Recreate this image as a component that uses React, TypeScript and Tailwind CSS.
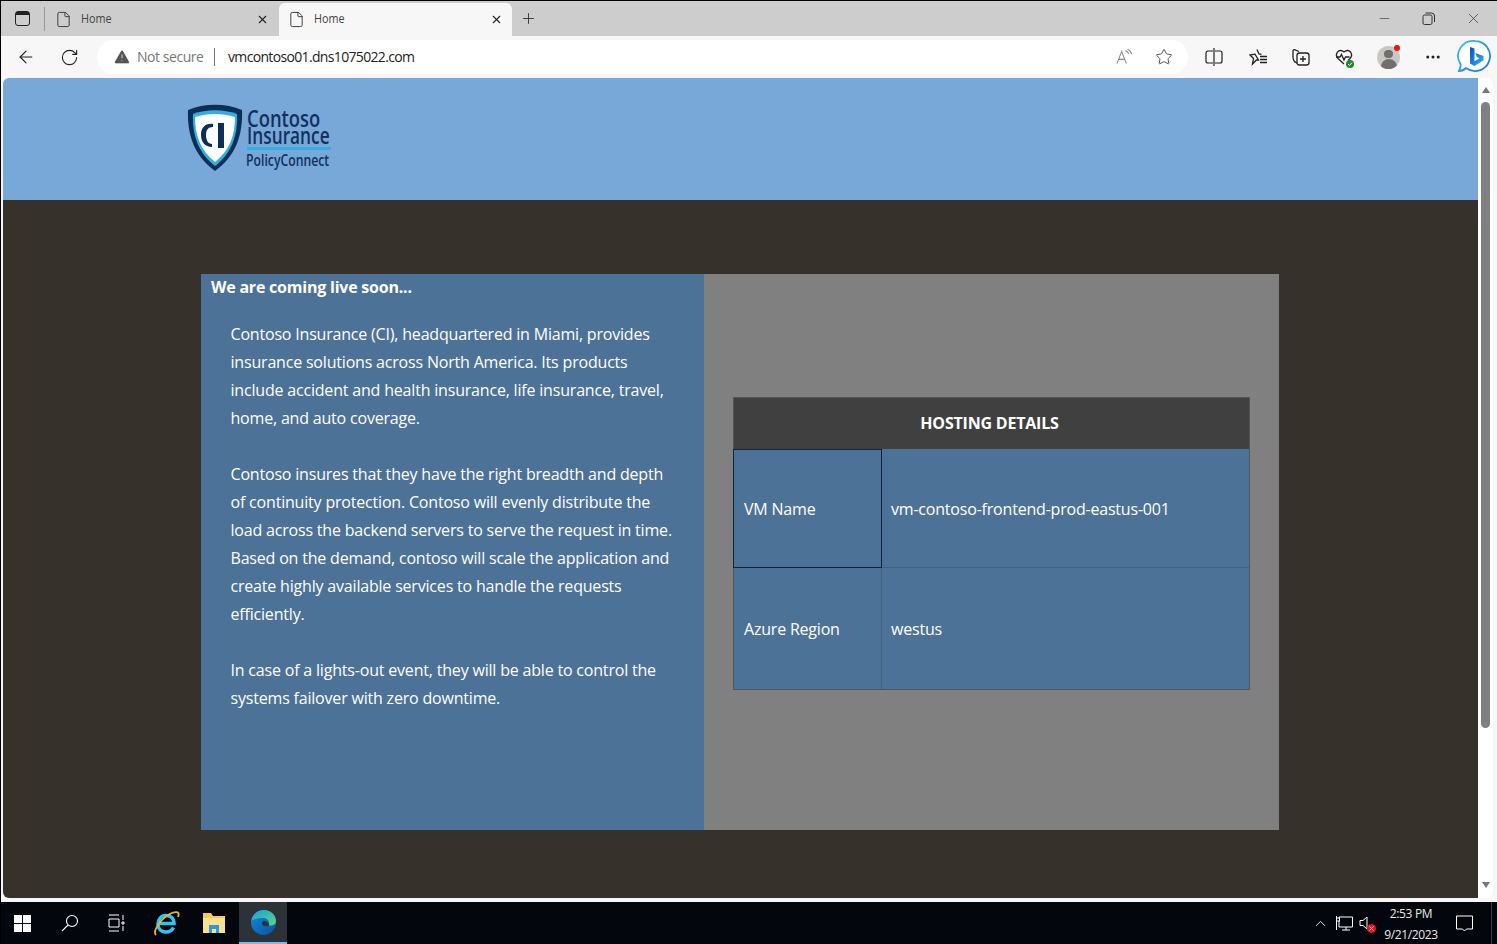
import { ArrowLeft, RotateCw, Star, Plus, X, Minus, File, ChevronUp, MoreHorizontal, TriangleAlert } from "lucide-react";

const chromeFont = "font-['Open_Sans',sans-serif]";

function Tab({ active }: { active?: boolean }) {
  return (
    <div
      className={`flex h-[33px] w-[233px] items-center rounded-t-md pl-[9px] ${
        active ? "bg-[#f7f7f7] pr-[9px]" : "pr-[10px]"
      }`}
    >
      <File size={17} strokeWidth={1.3} className="text-[#333]" />
      <span className="ml-[9px] origin-left scale-x-[0.9] pb-[2px] text-[12px] text-[#444]">Home</span>
      <X size={13} strokeWidth={2} className="ml-auto text-[#222]" />
    </div>
  );
}

function BingIcon() {
  return (
    <svg width="34" height="36" viewBox="0 0 34 36">
      <defs>
        <linearGradient id="bingRing" x1="0" y1="0" x2="1" y2="1">
          <stop offset="0" stopColor="#39c2f5" />
          <stop offset="1" stopColor="#1c6fe0" />
        </linearGradient>
        <linearGradient id="bingB" x1="0" y1="0" x2="1" y2="1">
          <stop offset="0" stopColor="#0b4fc0" />
          <stop offset="1" stopColor="#2bb6f2" />
        </linearGradient>
      </defs>
      <path d="M18 2a15 15 0 1 1-9 27c-2 2-4 3-7 3 1-2 2-4 1.500-7A15 15 0 0 1 18 2z" fill="#fff" stroke="url(#bingRing)" strokeWidth="1.800" />
      <path d="M13 8l4.500 1.600v12.600l5-2.900-2.600-1.200-1.600-4.100 8.200 2.900v4.300L17.500 27 13 24.500z" fill="url(#bingB)" />
    </svg>
  );
}

function ReadAloudIcon() {
  return (
    <svg width="17" height="18" viewBox="0 0 18 18" fill="none" stroke="#888" strokeWidth="1.100">
      <path d="M1 16L6 3l5 13M3 11.500h6" />
      <path d="M10 2c2 .5 3 2 3.500 4M12 1c2.500 .5 4 2.500 4.500 5" />
    </svg>
  );
}

function FavoritesIcon() {
  return (
    <svg width="20" height="18" viewBox="0 0 20 18" fill="none" stroke="#222" strokeWidth="1.300">
      <path d="M8 1.500l2 4.500 2.500.3M9.500 12h-2l-4 4 1-5.500L1 7l5-.8z" />
      <path d="M11 8.500h7M11 11.500h7M11 14.500h7" />
    </svg>
  );
}

function CollectionsIcon() {
  return (
    <svg width="18" height="18" viewBox="0 0 18 18" fill="none" stroke="#222" strokeWidth="1.300">
      <path d="M7 3.500L3 1.800C2 1.500 1 2 1 3v6c0 3 1 5 4 6" />
      <rect x="5" y="5" width="12" height="12" rx="2.500" />
      <path d="M11 8v6M8 11h6" />
    </svg>
  );
}

function HealthIcon() {
  return (
    <div className="relative h-[18px] w-[18px]">
      <svg width="18" height="18" viewBox="0 0 18 18" fill="none" stroke="#222" strokeWidth="1.300">
        <path d="M9 16L3 10.500C-1 6 4-.5 9 4c5-4.500 10 2 6 6.500l-2 2" />
        <path d="M1 9h4l1.500-2.500L9 12l1.500-3h4" />
      </svg>
      <div className="absolute bottom-[-2px] right-[-1px] flex h-[8px] w-[8px] items-center justify-center rounded-full bg-[#1a8a2e]">
        <svg width="6" height="6" viewBox="0 0 6 6" fill="none" stroke="#fff" strokeWidth="1">
          <path d="M1 3l1.500 1.500L5 1.500" />
        </svg>
      </div>
    </div>
  );
}

function SplitIcon() {
  return (
    <svg width="18" height="20" viewBox="0 0 18 20" fill="none" stroke="#222" strokeWidth="1.200">
      <path d="M8 4H3a2 2 0 0 0-2 2v8a2 2 0 0 0 2 2h5M10 4h5a2 2 0 0 1 2 2v8a2 2 0 0 1-2 2h-5M9 1v18" />
    </svg>
  );
}

function Toolbar() {
  return (
    <div className={`flex h-[42px] items-center bg-[#f7f7f7] ${chromeFont}`}>
      <ArrowLeft size={20} strokeWidth={1.4} className="ml-[15px] text-[#222]" />
      <RotateCw size={19} strokeWidth={1.4} className="ml-[24px] text-[#222]" />
      <div className="ml-[18px] flex h-[34px] w-[1091px] items-center rounded-full bg-white pl-[16px] pr-[15px]">
        <TriangleAlert size={18} fill="#555" strokeWidth={1} className="text-white" />
        <span className="ml-[6px] w-[66px] whitespace-nowrap pb-[2px] text-[14px] tracking-[-0.45px] text-[#777]">Not secure</span>
        <div className="ml-[11px] h-[18px] w-px bg-[#777]" />
        <span className="ml-[13px] whitespace-nowrap pb-[2px] text-[14px] tracking-[-0.66px] text-[#222]">vmcontoso01.dns1075022.com</span>
        <div className="ml-auto">
          <ReadAloudIcon />
        </div>
        <Star size={18} strokeWidth={1.2} className="ml-[22px] text-[#444]" />
      </div>
      <div className="ml-[17px]">
        <SplitIcon />
      </div>
      <div className="ml-[26px]">
        <FavoritesIcon />
      </div>
      <div className="ml-[23px]">
        <CollectionsIcon />
      </div>
      <div className="ml-[25px]">
        <HealthIcon />
      </div>
      <div className="relative ml-[24px] flex h-[23px] w-[23px] flex-col items-center overflow-hidden rounded-full bg-[#c9c7c4]">
        <div className="mt-[4px] h-[9px] w-[9px] rounded-full bg-[#716f6d]" />
        <div className="mt-[1px] h-[10px] w-[16px] rounded-t-full bg-[#716f6d]" />
      </div>
      <div className="relative">
        <div className="absolute -left-[6px] -top-[12px] h-[6px] w-[6px] rounded-full bg-[#ee1111]" />
      </div>
      <MoreHorizontal size={18} strokeWidth={2} className="ml-[24px] text-[#222]" />
      <div className="ml-[15px]">
        <BingIcon />
      </div>
    </div>
  );
}

function Logo() {
  return (
    <div className="ml-[183px] flex items-start pt-[24px]">
      <svg width="58" height="70" viewBox="0 0 58 70">
        <path d="M2 8C18 1 40 1 56 8 57 32 50 54 29 69 8 54 1 32 2 8z" fill="#0d2f55" />
        <path d="M7 12c14-5 30-5 44 0 1 20-5 39-22 52C12 51 6 32 7 12z" fill="#2fb0e0" />
        <path d="M9 15c13-4 27-4 40 0 0 18-5 33-20 45C14 48 9 33 9 15z" fill="#fff" />
        <path d="M27 22c-8-1-12 4-12 11s4 12 11 12v-3c-4 0-6-4-6-9s2-8 7-8z" fill="#0d2f55" />
        <rect x="32" y="21" width="6" height="25" fill="#0d2f55" />
      </svg>
      <div className="ml-[3px] flex flex-col font-['Open_Sans',sans-serif] text-[#12315f]">
        <span className="mt-[8px] h-[16px] origin-left scale-x-[0.8] whitespace-nowrap text-[23px] font-semibold leading-[16px]">Contoso</span>
        <span className="h-[18px] origin-left scale-x-[0.72] whitespace-nowrap text-[24px] font-semibold leading-[18px]">Insurance</span>
        <div className="mt-[3px] h-[3px] w-[84px] bg-[#2fb0e0]" />
        <span className="-ml-[1px] mt-[1px] origin-left scale-x-[0.72] whitespace-nowrap text-[17px] font-semibold leading-[18px]">PolicyConnect</span>
      </div>
    </div>
  );
}

function LeftPanel() {
  return (
    <div className="h-full w-[503px] bg-[#4d7298] pl-[10px] text-white">
      <div className="text-[16px] font-bold leading-[26px] tracking-[-0.22px]">We are coming live soon...</div>
      <div className="ml-[19.500px] mt-[20px] whitespace-nowrap text-[16px] leading-[28px] tracking-[-0.19px]">
        <p>
          Contoso Insurance (CI), headquartered in Miami, provides
          <br />
          insurance solutions across North America. Its products
          <br />
          include accident and health insurance, life insurance, travel,
          <br />
          home, and auto coverage.
        </p>
        <p className="mt-[28px]">
          Contoso insures that they have the right breadth and depth
          <br />
          of continuity protection. Contoso will evenly distribute the
          <br />
          load across the backend servers to serve the request in time.
          <br />
          Based on the demand, contoso will scale the application and
          <br />
          create highly available services to handle the requests
          <br />
          efficiently.
        </p>
        <p className="mt-[28px]">
          In case of a lights-out event, they will be able to control the
          <br />
          systems failover with zero downtime.
        </p>
      </div>
    </div>
  );
}

function HostingTable() {
  return (
    <div className="w-[517px] border border-[#555] text-[16px] tracking-[-0.2px] text-white">
      <div className="flex h-[51px] items-center justify-center bg-[#404040] pb-[2px] pr-[4px] font-bold">HOSTING DETAILS</div>
      <div className="flex h-[119px] bg-[#4d7298]">
        <div className="-ml-px flex w-[149px] items-center border border-[#13233a] pl-[10px]">VM Name</div>
        <div className="flex flex-1 items-center border-b border-[#44607f] pl-[9px] pt-[1px]">vm-contoso-frontend-prod-eastus-001</div>
      </div>
      <div className="flex h-[121px] bg-[#4d7298]">
        <div className="flex w-[148px] items-center border-r border-[#44607f] pl-[10px]">Azure Region</div>
        <div className="flex flex-1 items-center pl-[9px]">westus</div>
      </div>
    </div>
  );
}

function EdgeIcon() {
  return (
    <svg width="27" height="27" viewBox="0 0 27 27">
      <defs>
        <linearGradient id="edgeTop" x1="0" y1="0" x2="1" y2="1">
          <stop offset="0" stopColor="#1b9de2" />
          <stop offset="1" stopColor="#5bd97a" />
        </linearGradient>
        <linearGradient id="edgeBody" x1="0" y1="0" x2="1" y2="1">
          <stop offset="0" stopColor="#0f8fdc" />
          <stop offset="1" stopColor="#0c4f9e" />
        </linearGradient>
      </defs>
      <circle cx="13.500" cy="13.500" r="12.500" fill="url(#edgeBody)" />
      <path d="M1.500 11C3 4 9 1 14 1c7 0 12 5 12 11 0 4-4 5-7 4.500 1-3-1-7-5-7.500-5-.5-9 1-12.500 2.500z" fill="url(#edgeTop)" />
      <path d="M19 16.500c-2 1-5 1-6.500-.5-1-1-1-3 1-4 2.500-.5 5 1 5.500 4.500z" fill="#2d3138" />
    </svg>
  );
}

function Taskbar() {
  return (
    <div className="flex h-[42px] items-center bg-[#03060c] text-white">
      <div className="ml-[13px] grid h-[17px] w-[17px] grid-cols-2 gap-[1px]">
        <div className="bg-white" />
        <div className="bg-white" />
        <div className="bg-white" />
        <div className="bg-white" />
      </div>
      <svg width="18" height="18" viewBox="0 0 18 18" fill="none" stroke="#fff" strokeWidth="1.100" className="ml-[30px]">
        <circle cx="11" cy="7" r="5.500" />
        <path d="M7 11l-6 6" />
      </svg>
      <svg width="18" height="18" viewBox="0 0 18 18" fill="none" stroke="#fff" strokeWidth="1" className="ml-[28px]">
        <path d="M2 1h10M2 17h10M2 5h10v8H2zM16 1v5M16 12v5M15 8h2v2h-2z" />
      </svg>
      <svg width="28" height="28" viewBox="0 0 28 28" fill="none" className="ml-[27px]">
        <path d="M7 14.500h15C22 9 18 6.500 14 6.500c-5 0-8 4-8 8.500 0 5 3.500 8 8 8 3.500 0 6-1.500 7.500-4.500" stroke="#35c1f1" strokeWidth="3.500" />
        <path d="M4 26C0 22 10 8 20 4c5-2 8-1 6 4" stroke="#e8b923" strokeWidth="1.800" />
      </svg>
      <svg width="24" height="22" viewBox="0 0 24 22" className="ml-[22px]">
        <path d="M1 1h8l2 3h12v17H1z" fill="#f5c95c" />
        <path d="M1 6h22v15H1z" fill="#fbe08f" />
        <path d="M7 21v-8h10v8h-3v-4h-4v4z" fill="#2b9ae0" />
      </svg>
      <div className="ml-[13px] flex h-[42px] w-[48px] items-center justify-center border-b-2 border-[#76b9ed] bg-[#2d3138]">
        <EdgeIcon />
      </div>
      <ChevronUp size={17} strokeWidth={1.2} className="ml-auto text-white" />
      <svg width="17" height="17" viewBox="0 0 17 17" fill="none" stroke="#fff" strokeWidth="1" className="ml-[7px]">
        <path d="M.500 1v14M3 2h13.500v10H3zM10 12v3M6 15h8" />
        <rect x=".500" y="3" width="3" height="3" fill="#03060c" />
      </svg>
      <div className="relative ml-[6px] h-[16px] w-[16px]">
        <svg width="10" height="16" viewBox="0 0 10 16" fill="none" stroke="#fff" strokeWidth="1">
          <path d="M1 5.500h3L8 2v12l-4-3.500H1z" />
        </svg>
        <div className="absolute bottom-[-2px] right-[-1px] flex h-[9px] w-[9px] items-center justify-center rounded-full bg-[#e81123]">
          <X size={7} strokeWidth={3} className="text-white" />
        </div>
      </div>
      <div className={`ml-[8px] flex w-[56px] flex-col items-center pt-[1px] text-[12px] leading-[21px] tracking-[-0.35px] text-[#e8e8e8] ${chromeFont}`}>
        <span>2:53 PM</span>
        <span>9/21/2023</span>
      </div>
      <svg width="19" height="19" viewBox="0 0 19 19" fill="none" stroke="#fff" strokeWidth="1" className="ml-[16px]">
        <path d="M1.500 2h16v13h-6l-2 2-2-2h-6z" />
      </svg>
      <div className="ml-[17px] h-[42px] w-px bg-[#3a3d42]" />
      <div className="w-[5px]" />
    </div>
  );
}

export default function App() {
  return (
    <div className="flex h-[944px] w-[1497px] flex-col overflow-hidden border-l border-black bg-white font-['Open_Sans',sans-serif]">
      {/* Tab strip */}
      <div className={`flex h-[36px] items-end border-t border-black bg-[#cdcdcd] ${chromeFont}`}>
        <div className="mb-[1px] flex h-[33px] items-center">
          <div className="ml-[14px] flex h-[15px] w-[15px] flex-col rounded-[3px] border-[1.5px] border-[#222]">
            <div className="h-[3px] bg-[#222]" />
          </div>
          <div className="ml-[14px] mr-[1px] h-[24px] w-px bg-[#999]" />
        </div>
        <Tab />
        <Tab active />
        <Plus size={17} strokeWidth={1.3} className="mb-[9px] ml-[8px] text-[#333]" />
        <div className="mb-[9px] ml-auto flex items-center gap-[30px] pr-[15px] text-[#333]">
          <Minus size={15} strokeWidth={1} />
          <svg width="13" height="13" viewBox="0 0 13 13" fill="none" stroke="#333" strokeWidth="1">
            <rect x="1" y="3" width="9" height="9.500" rx="1.500" />
            <path d="M3.500 1h6a3 3 0 0 1 3 3v6" />
          </svg>
          <X size={17} strokeWidth={1} />
        </div>
      </div>
      <Toolbar />

      {/* Page viewport */}
      <div className="flex h-[820px] bg-[#f7f7f7] pl-[2px] pr-[4px]">
        <div className="w-[1475px] overflow-hidden rounded-l-md">
          <div className="flex h-[122px] bg-[#77a8d8]">
            <Logo />
          </div>
          <div className="h-[698px] bg-[#36322b] pl-[198px] pt-[74px]">
            <div className="flex h-[556px] w-[1078px] bg-[#808080]">
              <LeftPanel />
              <div className="flex-1 pl-[29px] pt-[123px]">
                <HostingTable />
              </div>
            </div>
          </div>
        </div>
        <div className="flex w-[15px] flex-col items-center rounded-r-md bg-white">
          <div className="mt-[9px] h-0 w-0 border-x-[4px] border-b-[6px] border-x-transparent border-b-[#777]" />
          <div className="mt-[9px] h-[626px] w-[9px] rounded-full bg-[#808080]" />
          <div className="mb-[10px] mt-auto h-0 w-0 border-x-[4px] border-t-[6px] border-x-transparent border-t-[#777]" />
        </div>
      </div>
      <div className="h-[4px] bg-[#f7f7f7]" />
      <Taskbar />
    </div>
  );
}
